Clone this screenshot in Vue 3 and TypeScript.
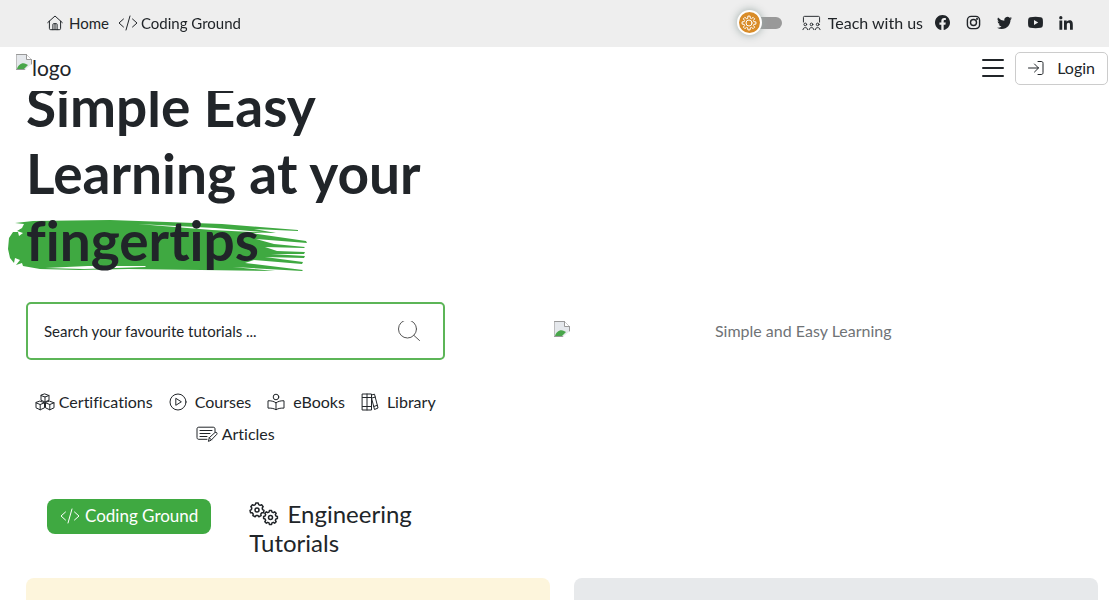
<script setup lang="ts">
import { ref } from 'vue'

interface QuickLink {
  name: string
  label: string
}

const dayMode = ref(true)
const query = ref('')

const quickLinks: QuickLink[] = [
  { name: 'cubes', label: 'Certifications' },
  { name: 'play', label: 'Courses' },
  { name: 'reader', label: 'eBooks' },
  { name: 'books', label: 'Library' },
  { name: 'article', label: 'Articles' },
]

// Outline of a toothed wheel centred on (cx, cy).
function gear(cx: number, cy: number, outer: number, inner: number, teeth: number): string {
  const step = (Math.PI * 2) / teeth
  const offsets: Array<[number, number]> = [
    [-0.34, inner],
    [-0.2, outer],
    [0.2, outer],
    [0.34, inner],
  ]
  const points: string[] = []
  for (let i = 0; i < teeth; i++) {
    for (const [offset, radius] of offsets) {
      const angle = (i + offset) * step - Math.PI / 2
      points.push(`${(cx + radius * Math.cos(angle)).toFixed(2)} ${(cy + radius * Math.sin(angle)).toFixed(2)}`)
    }
  }
  return `M${points.join('L')}Z`
}

const sunGear = gear(8, 8, 7, 5, 8)
const largeGear = gear(8, 8, 7, 5.6, 7)
const smallGear = gear(21.5, 15.5, 7, 5.6, 8)
</script>

<template>
  <div class="page">
    <header class="site-header">
      <div class="topbar">
        <nav class="top-links" aria-label="Main">
          <a href="#home" class="top-link">
            <svg class="home-icon" viewBox="0 0 16 16" aria-hidden="true">
              <path d="M.7 7.6 8 1l7.3 6.6M2.4 6.2v7.2c0 .9.4 1.3 1.3 1.3h8.6c.9 0 1.3-.4 1.3-1.3V6.2M5.9 14.7V9.4c0-.5.2-.7.7-.7h2.8c.5 0 .7.2.7.7v5.3M8 8.8v5.8" />
            </svg>
            Home
          </a>
          <a href="#coding" class="top-link code-link">
            <svg class="code-icon" viewBox="0 0 20 16" aria-hidden="true">
              <path d="M5.500 4 1 8l4.500 4M14.500 4 19 8l-4.500 4M12 1 8 15" />
            </svg>
            Coding Ground
          </a>
        </nav>
        <div class="top-tools">
          <label class="theme-switch">
            <input v-model="dayMode" type="checkbox" aria-label="Day mode" />
            <span class="track"></span>
            <span class="knob">
              <svg viewBox="0 0 16 16" aria-hidden="true">
                <path :d="sunGear" />
                <circle cx="8" cy="8" r="3" />
              </svg>
            </span>
          </label>
          <a href="#teach" class="teach-link">
            <svg class="teach-icon" viewBox="0 0 20 16" aria-hidden="true">
              <path d="M1.500 7V2.200C1.500 1.400 1.900 1 2.700 1h14.600c.8 0 1.200.4 1.200 1.200V7" />
              <circle cx="3.500" cy="9.500" r="1.400" />
              <circle cx="10" cy="9.500" r="1.400" />
              <circle cx="16.500" cy="9.500" r="1.400" />
              <path d="M1 15c0-3 5-3 5 0M7.500 15c0-3 5-3 5 0M14 15c0-3 5-3 5 0" />
            </svg>
            Teach with us
          </a>
          <nav class="socials" aria-label="Social media">
            <a href="#facebook" aria-label="Facebook">
              <svg viewBox="0 0 16 16"><path d="M16 8.049c0-4.446-3.582-8.05-8-8.05C3.58 0-.002 3.603-.002 8.05c0 4.017 2.926 7.347 6.75 7.951v-5.625h-2.03V8.05H6.75V6.275c0-2.017 1.195-3.131 3.022-3.131.876 0 1.791.157 1.791.157v1.98h-1.009c-.993 0-1.303.621-1.303 1.258v1.51h2.218l-.354 2.326H9.25V16c3.824-.604 6.75-3.934 6.75-7.951" /></svg>
            </a>
            <a href="#instagram" aria-label="Instagram">
              <svg viewBox="0 0 16 16" class="outlined">
                <rect x="1.500" y="1.500" width="13" height="13" rx="4" />
                <circle cx="8" cy="8" r="3.200" />
                <circle cx="11.800" cy="4.200" r=".4" />
              </svg>
            </a>
            <a href="#twitter" aria-label="Twitter">
              <svg viewBox="0 0 16 16"><path d="M5.026 15c6.038 0 9.341-5.003 9.341-9.334q.002-.211-.006-.422A6.7 6.7 0 0 0 16 3.542a6.7 6.7 0 0 1-1.889.518 3.3 3.3 0 0 0 1.447-1.817 6.5 6.5 0 0 1-2.087.793A3.286 3.286 0 0 0 7.875 6.03a9.32 9.32 0 0 1-6.767-3.429 3.29 3.29 0 0 0 1.018 4.382A3.3 3.3 0 0 1 .64 6.575v.045a3.29 3.29 0 0 0 2.632 3.218 3.2 3.2 0 0 1-.865.115 3 3 0 0 1-.614-.057 3.28 3.28 0 0 0 3.067 2.277A6.6 6.6 0 0 1 .78 13.58a6 6 0 0 1-.78-.045A9.34 9.34 0 0 0 5.026 15" /></svg>
            </a>
            <a href="#youtube" aria-label="YouTube">
              <svg viewBox="0 0 16 16"><path fill-rule="evenodd" d="M2.500 2.300Q8 1.600 13.500 2.300 15.400 2.500 15.700 4.300 16.200 8 15.700 11.700 15.400 13.500 13.500 13.700 8 14.400 2.500 13.700.6 13.500.3 11.700-.2 8 .3 4.300.6 2.500 2.500 2.300ZM6.400 5.400v5.200L10.900 8Z" /></svg>
            </a>
            <a href="#linkedin" aria-label="LinkedIn">
              <svg class="narrow" viewBox="0 0 448 460"><path d="M100.280 448H7.400V148.900h92.880zM53.790 108.100C24.090 108.100 0 83.500 0 53.800a53.790 53.790 0 0 1 107.580 0c0 29.700-24.100 54.300-53.790 54.300zM447.900 448h-92.680V302.400c0-34.700-.7-79.200-48.290-79.200-48.290 0-55.690 37.700-55.690 76.700V448h-92.780V148.900h89.080v40.800h1.300c12.400-23.500 42.690-48.300 87.880-48.300 94 0 111.280 61.900 111.280 142.300V448z" /></svg>
            </a>
          </nav>
        </div>
      </div>
      <div class="brandbar">
        <a href="#home" class="brand">
          <svg class="missing" viewBox="0 0 16 16" aria-hidden="true">
            <path class="sheet" d="M.5.500h10l5 5v10H.5z" />
            <path class="hill" d="M1 15c1-4 5-7 9-5l2 1-4 4z" />
            <path class="fold" d="M10.500.500v5h5" />
            <path class="tear" d="m8.500 16 7.500-6v6z" />
          </svg>
          <span>logo</span>
        </a>
        <div class="brand-actions">
          <button type="button" class="menu-button" aria-label="Open menu">
            <span></span><span></span><span></span>
          </button>
          <button type="button" class="login-button">
            <svg viewBox="0 0 16 16" aria-hidden="true">
              <path d="M.5 8h10M6.500 4l4 4-4 4M10 1.500h3.200c1.200 0 1.800.6 1.800 1.800v9.400c0 1.200-.6 1.800-1.800 1.800H10" />
            </svg>
            Login
          </button>
        </div>
      </div>
    </header>

    <main>
      <section class="hero">
        <div class="intro">
          <h1>
            Simple Easy Learning at your
            <span class="marked">
              <svg class="brush" viewBox="0 0 300 52" preserveAspectRatio="none" aria-hidden="true">
                <path d="M7 3 25 1 102 0 159 2 214 4 252 7 290 10 290 11 246 9 268 13 242 13 298 21 299 23 248 19 266 24 297 27 296 28 257 27 269 31 297 32 296 34 263 34 297 36 296 38 257 37 295 42 294 44 246 40 237 43 295 50 294 51 225 47 267 51 120 49 71 50 32 49 15 46 14 43 8 45 12 40 7 38 6 43 2 38 0 29 1 18 5 12 10 12 11 16 15 13 9 11 14 8 16 4Z" />
                <path class="gap" d="M130 4 207 8 265 13 204 10Z" />
                <path class="gap" d="M37 48 80 46 137 46 138 47 76 49Z" />
              </svg>
              fingertips
            </span>
          </h1>
          <form class="search" role="search" @submit.prevent>
            <input v-model="query" type="search" placeholder="Search your favourite tutorials ..." aria-label="Search tutorials" />
            <button type="submit" aria-label="Search">
              <svg viewBox="0 0 24 20" aria-hidden="true">
                <circle cx="10.500" cy="8" r="9" />
                <path d="m17 14.500 5.500 5" />
              </svg>
            </button>
          </form>
          <nav class="quick-links" aria-label="Resources">
            <a v-for="link in quickLinks" :key="link.name" :href="'#' + link.name" :class="link.name">
              <svg v-if="link.name === 'cubes'" viewBox="0 0 20 18" aria-hidden="true">
                <path d="m10 1 4 1.500v4.700L10 9 6 7.200V2.500zM6 2.500 10 4l4-1.500M10 4v5M5.200 8.200l4.300 1.600v5L5.200 16.800 1 14.800v-5zM1 9.800l4.200 1.700 4.300-1.700M5.200 11.500v5.300M14.800 8.200 19 9.800v5l-4.200 2-4.300-2v-5zM10.500 9.800l4.300 1.700L19 9.800M14.800 11.500v5.300" />
              </svg>
              <svg v-else-if="link.name === 'play'" viewBox="0 0 18 18" aria-hidden="true">
                <circle cx="9" cy="9" r="8" />
                <path d="M6.800 5.700v6.600L12 9z" />
              </svg>
              <svg v-else-if="link.name === 'reader'" viewBox="0 0 18 18" aria-hidden="true">
                <circle cx="9" cy="4" r="2.800" />
                <path d="M9 16.700V9.800C6.500 8.200 4 7.600 1 7.800v7.300c3-.1 5.500.2 8 1.600 2.500-1.400 5-1.700 8-1.600V7.800c-3-.2-5.500.4-8 2" />
              </svg>
              <svg v-else-if="link.name === 'books'" viewBox="0 0 18 18" aria-hidden="true">
                <path d="M1.500 1h9v16h-9zM6 1v16M1.500 4.500h9M1.500 13.500h9M10.500 2l3-.8L17 15l-3.500 1.500-3-11.500M10.800 5l3.500-.9M12.800 13.500l3.500-1.200" />
              </svg>
              <svg v-else viewBox="0 0 22 16" aria-hidden="true">
                <path d="M19 6V3c0-1.200-.6-1.800-1.800-1.800H2.800C1.600 1.200 1 1.800 1 3v8.500c0 1.200.6 1.800 1.800 1.800H11M4 4.500h12M4 7.500h10M4 10.500h7M12.500 15l.8-3.300 5.700-5.200c1.300-.8 2.600.5 1.800 1.800l-5.400 5.600zM13.300 11.700l2.100 2.200" />
              </svg>
              <span>{{ link.label }}</span>
            </a>
          </nav>
        </div>
        <div class="illustration" role="img" aria-label="Simple and Easy Learning">
          <svg class="missing" viewBox="0 0 16 16" aria-hidden="true">
            <path class="sheet" d="M.5.500h10l5 5v10H.5z" />
            <path class="hill" d="M1 15c1-4 5-7 9-5l2 1-4 4z" />
            <path class="fold" d="M10.500.500v5h5" />
            <path class="tear" d="m8.500 16 7.500-6v6z" />
          </svg>
          <span>Simple and Easy Learning</span>
        </div>
      </section>

      <section class="topics">
        <a href="#coding" class="coding-button">
          <svg class="code-icon" viewBox="0 0 20 16" aria-hidden="true">
            <path d="M5.500 4 1 8l4.500 4M14.500 4 19 8l-4.500 4M12 1 8 15" />
          </svg>
          Coding Ground
        </a>
        <h2>
          <svg viewBox="0 0 30 24" aria-hidden="true">
            <path :d="largeGear" />
            <circle cx="8" cy="8" r="2" />
            <path :d="smallGear" />
            <circle cx="21.500" cy="15.500" r="2" />
          </svg>
          Engineering Tutorials
        </h2>
      </section>

      <section class="panels" aria-label="Tutorial categories">
        <div class="panel cream"></div>
        <div class="panel grey"></div>
      </section>
    </main>
  </div>
</template>

<style>
html {
  overflow: hidden;
}

body {
  margin: 0;
  background: #fff;
}
</style>

<style scoped>
* {
  box-sizing: border-box;
}

.page {
  height: 100vh;
  overflow: hidden;
  color: #212529;
  font-family: Lato, "Open Sans", sans-serif;
  font-size: 16px;
  font-variant-ligatures: none;
  line-height: 24px;
}

a {
  color: inherit;
  text-decoration: none;
}

button {
  padding: 0;
  border: 0;
  background: none;
  color: inherit;
  font: inherit;
}

svg {
  display: block;
  flex: none;
  fill: none;
  stroke: currentColor;
  stroke-linecap: round;
  stroke-linejoin: round;
}

.site-header {
  position: sticky;
  top: 0;
  z-index: 10;
  background: #fff;
}

.topbar {
  display: flex;
  align-items: center;
  justify-content: space-between;
  height: 47px;
  padding: 0 36px 2px 47px;
  background: #eee;
}

.top-links,
.top-link,
.top-tools,
.teach-link,
.socials {
  display: flex;
  align-items: center;
}

.top-links {
  gap: 9px;
}

.top-link {
  gap: 6px;
  font-size: 15px;
}

.code-link {
  gap: 3px;
}

.home-icon {
  width: 16px;
  height: 16px;
}

.code-icon {
  width: 20px;
  height: 16px;
}

.theme-switch {
  display: grid;
  align-items: center;
  width: 45px;
  margin-right: 20px;
}

.theme-switch > * {
  grid-area: 1 / 1;
}

.theme-switch input {
  margin: 0;
  opacity: 0;
}

.track {
  height: 12px;
  margin-left: 14px;
  border-radius: 6px;
  background: #999;
}

.knob {
  display: grid;
  place-items: center;
  width: 25px;
  height: 25px;
  border: 2px solid #fff;
  border-radius: 50%;
  background: #d98c28;
  box-shadow: 0 0 8px #9ba9a6;
  color: #fff;
}

.knob svg {
  width: 16px;
  height: 16px;
}

.teach-link {
  gap: 7px;
  margin-right: 12px;
}

.teach-icon {
  width: 19px;
  height: 16px;
}

.socials {
  gap: 16px;
}

.socials svg {
  width: 15px;
  height: 15px;
  fill: currentColor;
  stroke: none;
}

.socials .narrow {
  width: 14px;
  height: 14px;
}

.socials .outlined {
  fill: none;
  stroke: currentColor;
  stroke-width: 1.5;
}

.brandbar {
  display: flex;
  justify-content: space-between;
  height: 44px;
  padding: 5px 1px 0 16px;
}

.brand {
  display: flex;
  font-size: 21px;
  line-height: 32px;
}

.missing {
  width: 16px;
  height: 16px;
  margin-top: 2px;
  stroke: none;
}

.sheet {
  fill: #e5e8ec;
  stroke: #999;
}

.hill {
  fill: #49a64b;
}

.fold {
  fill: #fff;
  stroke: #999;
}

.tear {
  fill: #fff;
}

.brand-actions {
  display: flex;
  gap: 11px;
}

.menu-button {
  display: flex;
  flex-direction: column;
  gap: 6px;
  width: 22px;
  padding-top: 7px;
}

.menu-button span {
  width: 100%;
  height: 2px;
  border-radius: 1px;
  background: #212529;
}

.login-button {
  display: flex;
  align-items: center;
  gap: 13px;
  height: 33px;
  padding: 0 12px 2px;
  border: 1px solid #ccc;
  border-radius: 5px;
}

.login-button svg {
  width: 16px;
  height: 16px;
}

.hero {
  display: grid;
  grid-template-columns: 1fr 1fr;
  align-items: start;
  margin-top: -18px;
  padding-right: 2px;
}

.intro {
  padding: 0 109px 0 26px;
}

h1 {
  isolation: isolate;
  margin: 0;
  font-size: 55px;
  font-weight: 700;
  line-height: 67px;
}

.marked {
  display: inline-block;
  position: relative;
}

.brush {
  position: absolute;
  z-index: -1;
  top: 13px;
  left: -18px;
  width: 300px;
  height: 52px;
  fill: #3fa941;
  stroke: none;
}

.gap {
  fill: #fff;
}

.search {
  display: flex;
  align-items: center;
  height: 58px;
  margin-top: 28px;
  padding: 0 22px 0 16px;
  border: 2px solid #5cb557;
  border-radius: 5px;
}

.search input {
  flex: 1;
  min-width: 0;
  padding: 0;
  border: 0;
  outline: 0;
  background: none;
  color: #212529;
  font: inherit;
  font-size: 15px;
}

.search input::placeholder {
  color: #212529;
  opacity: 1;
}

.search svg {
  width: 24px;
  height: 20px;
  color: #555;
}

.quick-links {
  display: flex;
  flex-wrap: wrap;
  justify-content: center;
  column-gap: 16px;
  margin-top: 26px;
  line-height: 32px;
}

.quick-links a {
  display: flex;
  align-items: center;
  gap: 8px;
}

.quick-links svg {
  width: 18px;
  height: 18px;
}

.quick-links .cubes,
.quick-links .article {
  gap: 4px;
}

.quick-links .cubes svg {
  width: 20px;
}

.quick-links .article svg {
  width: 22px;
  height: 16px;
}

.illustration {
  display: flex;
  align-items: center;
  margin-top: 246px;
  padding-right: 70px;
  color: #6f7376;
}

.illustration span {
  flex: 1;
  text-align: center;
}

.illustration .missing {
  margin: 0 0 4px;
}

.topics {
  display: flex;
  align-items: flex-start;
  gap: 38px;
  margin-top: 49px;
  padding-left: 47px;
}

.coding-button {
  display: flex;
  align-items: center;
  gap: 5px;
  height: 35px;
  padding: 0 13px 2px;
  border-radius: 8px;
  background: #3fa941;
  color: #fff;
  font-size: 17px;
}

h2 {
  width: 180px;
  margin: 0;
  font-size: 24px;
  font-weight: 400;
  line-height: 29px;
}

h2 svg {
  display: inline-block;
  width: 30px;
  height: 24px;
  margin-right: 2px;
  stroke-width: 1.5;
  vertical-align: -3px;
}

.panels {
  display: grid;
  grid-template-columns: 1fr 1fr;
  gap: 24px;
  margin-top: 21px;
  padding: 0 11px 0 26px;
}

.panel {
  min-height: 240px;
  border-radius: 8px;
}

.cream {
  background: #fdf5dc;
}

.grey {
  background: #e7e9eb;
}
</style>
